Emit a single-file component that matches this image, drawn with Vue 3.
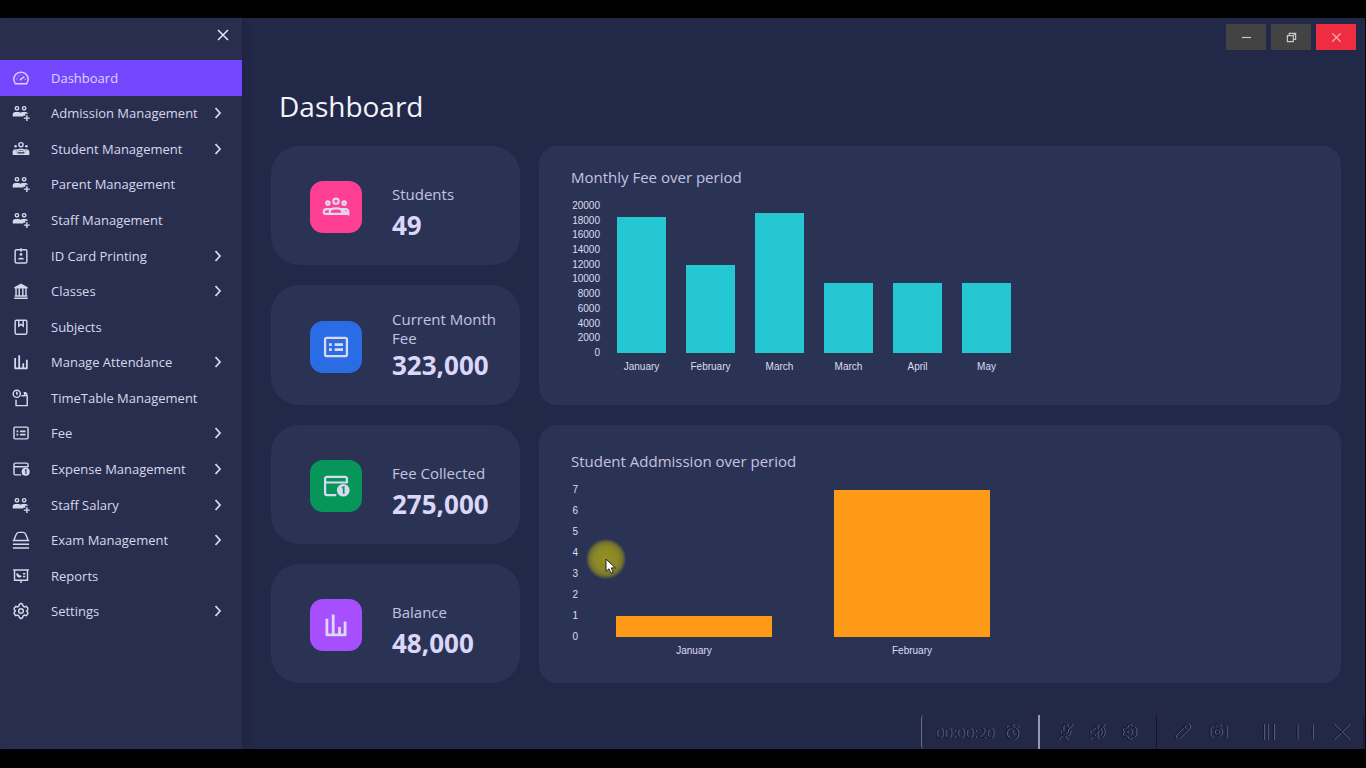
<script setup>
import { ref } from 'vue'

const active = ref('Dashboard')

const menu = [
  { label: 'Dashboard', icon: 'gauge' },
  { label: 'Admission Management', icon: 'people', sub: true },
  { label: 'Student Management', icon: 'group', sub: true },
  { label: 'Parent Management', icon: 'people' },
  { label: 'Staff Management', icon: 'people' },
  { label: 'ID Card Printing', icon: 'badge', sub: true },
  { label: 'Classes', icon: 'bank', sub: true },
  { label: 'Subjects', icon: 'book' },
  { label: 'Manage Attendance', icon: 'bars', sub: true },
  { label: 'TimeTable Management', icon: 'schedule' },
  { label: 'Fee', icon: 'list', sub: true },
  { label: 'Expense Management', icon: 'card', sub: true },
  { label: 'Staff Salary', icon: 'people', sub: true },
  { label: 'Exam Management', icon: 'exam', sub: true },
  { label: 'Reports', icon: 'report' },
  { label: 'Settings', icon: 'gear', sub: true },
]

const stats = [
  { label: 'Students', value: '49', icon: 'groupLine', tone: 'pink' },
  { label: 'Current Month Fee', value: '323,000', icon: 'list', tone: 'blue' },
  { label: 'Fee Collected', value: '275,000', icon: 'card', tone: 'green' },
  { label: 'Balance', value: '48,000', icon: 'bars', tone: 'purple' },
]

const charts = [
  {
    title: 'Monthly Fee over period',
    kind: 'fee',
    max: 20000,
    ticks: [20000, 18000, 16000, 14000, 12000, 10000, 8000, 6000, 4000, 2000, 0],
    bars: [
      { label: 'January', value: 18500 },
      { label: 'February', value: 12000 },
      { label: 'March', value: 19000 },
      { label: 'March', value: 9500 },
      { label: 'April', value: 9500 },
      { label: 'May', value: 9500 },
    ],
  },
  {
    title: 'Student Addmission over period',
    kind: 'admission',
    max: 7,
    ticks: [7, 6, 5, 4, 3, 2, 1, 0],
    bars: [
      { label: 'January', value: 1 },
      { label: 'February', value: 7 },
    ],
  },
]

const gear =
  '<path d="M8.3 2.6 10 1.6l1.7 1 .6 1.9 1.5.9 2-.5 1.7 1.7v2l-1.3 1.4 1.3 1.4v2l-1.7 1.7-2-.5-1.5.9-.6 1.9-1.7 1-1.7-1-.6-1.9-1.5-.9-2 .5-1.7-1.7v-2L3.8 10 2.5 8.600v-2l1.700-1.700 2 .5 1.500-.9z"/><circle cx="10" cy="10" r="2.600"/>'

const icons = {
  gauge:
    '<path d="M3.600 16.300a8 8 0 1 1 12.800 0z"/><path d="m9.500 11.700 4.200-3.400"/><path d="M5 11h.9M7 7.400l.5.5M10 6v.8M14.200 11.400h.9" /><circle cx="9.600" cy="11.700" r="1" class="solid"/>',
  people:
    '<circle cx="5.500" cy="4.800" r="1.900"/><circle cx="13.500" cy="4.800" r="1.900"/><path class="solid" d="M.8 14v-2.500c0-1.600 1.300-2.700 2.800-2.700h3.700c1 0 1.700.4 2.200 1 .5-.6 1.200-1 2.200-1h3.500c1.300 0 2.300.8 2.600 1.900h-3v2.300h-2.300V14z"/><path d="M16.500 12.500v6.500M13.200 15.700h6.500"/>',
  group:
    '<circle cx="10" cy="5.200" r="2.300"/><circle cx="4" cy="7" r="1.400" class="solid"/><circle cx="16" cy="7" r="1.400" class="solid"/><path d="M1.500 15.500v-2c0-1.500 1-2.500 2.500-2.500h1.500M14.500 11H16c1.500 0 2.500 1 2.500 2.500v2M5.500 15.500v-2c0-1.700 1.300-3 3-3h3c1.700 0 3 1.300 3 3v2M.8 15.800h18.400"/><path class="solid" d="M2 12h3v3.500H2zM15 12h3v3.500h-3zM7 12h6v1.500H7z"/>',
  groupLine:
    '<circle cx="10" cy="5.900" r="1.900"/><circle cx="4.200" cy="7.200" r="1.200"/><circle cx="15.800" cy="7.200" r="1.200"/><path d="M1.300 14.900v-1.500c0-1.100.8-1.900 1.900-1.900h3.400M13.400 11.500h3.400c1.100 0 1.900.8 1.900 1.900v1.500zM1.300 14.900h17.400M5.600 14.500v-1.200c0-1.500 1.800-2.400 4.400-2.400s4.400.9 4.400 2.400v1.200"/>',
  badge:
    '<rect x="3.500" y="3" width="13" height="14.800" rx="1.500"/><path d="M10 1.500v3.800"/><circle cx="10" cy="8.300" r="1.500" class="solid"/><path class="solid" d="M6.600 13.800c0-2.600 6.800-2.600 6.800 0z"/>',
  bank:
    '<path class="solid" d="M10 1.800 17.500 5.700v1.600h-15V5.700z"/><path d="M4.500 7v8M8 7v8M12 7v8M15.500 7v8M3 15.500h14M2.500 18h15"/>',
  book:
    '<rect x="3.500" y="2.500" width="13" height="15.500" rx="1.500"/><path d="M7.500 3v6L10 7.200 12.500 9V3"/>',
  bars:
    '<path class="bar" d="M3.500 5.500v11.500M8 2.500V17M12.500 11.500V17M16.500 7.500V17M2.700 17h14.600"/>',
  schedule:
    '<circle cx="5.300" cy="5.300" r="4"/><path d="M5.300 3v2.500h1.200M13 4.200h2l1.900 2M14 3.500v3.700h3.200M16.900 7v11.500H4.500v-6.500M10.500 7.500H14"/>',
  list:
    '<rect x="2.200" y="3.500" width="15.600" height="13" rx="1.200"/><path class="bar" d="M5 8.300h2M5 11.900h2M9 8.300h6M9 11.900h6"/>',
  card:
    '<path d="M17.800 8V5c0-.9-.6-1.500-1.500-1.500H3.700c-.9 0-1.500.6-1.500 1.500v10c0 .9.600 1.500 1.500 1.500h6.500M2.200 7.500h15.600"/><circle class="solid" cx="15.200" cy="13" r="4.500"/><path class="cut" d="m14.300 11.500 1.200-.7v4.700"/>',
  exam:
    '<path d="M2.300 9.800 4.600 3.800C5.100 2.300 6.200 1.500 7.700 1.500h4.600c1.500 0 2.600.8 3.100 2.300l2.300 6M.8 10.500h18.400M1 14.700h18M1 18.800h18"/>',
  report:
    '<path d="M1.300 3.300h17.400M2.800 3.300v11.400h14.400V3.300M10 14.700v3"/><path class="solid" d="M5.500 6.500a3 3 0 1 0 5.500 3.500L8 9z"/><path d="M12.200 7.500h2.500M12.200 10.500h2.500"/>',
  gear,
}

const mic =
  '<rect x="7.500" y="1.500" width="5" height="10" rx="2.500"/><path d="M4.500 8.500c0 3.500 2.300 5.700 5.500 5.700s5.500-2.200 5.500-5.700M10 14.200V18M7 18h6M18 1.500 2 18.500"/>'
const mute =
  '<path d="M2 7.500h3l5-4.500v14l-5-4.500H2zM13 6.500c1.800 2 1.800 5 0 7M15.500 4c3.300 3.300 3.300 8.700 0 12M18.500 1.500 1.500 18.500"/>'
const pencil =
  '<path d="m2 18 1.300-5L14 2.300c1-1 2.700-1 3.700 0s1 2.700 0 3.700L7 16.700zM12 4.500 15.500 8"/>'
const camera =
  '<path d="M4 4H1v12h3M16 4h3v12h-3M7 4l1-2h4l1 2"/><circle cx="10" cy="10" r="4"/><circle cx="10" cy="10" r="1"/>'
</script>

<template>
  <div class="screen">
    <div class="window">
      <aside class="sidebar">
        <div class="side-head">
          <button class="side-close" type="button" aria-label="Close menu">
            <svg viewBox="0 0 12 12"><path d="m1 1 10 10M11 1 1 11" /></svg>
          </button>
        </div>
        <nav class="menu">
          <button
            v-for="item in menu"
            :key="item.label"
            type="button"
            class="item"
            :class="{ active: item.label === active }"
            @click="active = item.label"
          >
            <svg class="icon" viewBox="0 0 20 20" v-html="icons[item.icon]"></svg>
            <span class="item-label">{{ item.label }}</span>
            <svg v-if="item.sub" class="chevron" viewBox="0 0 8 12"><path d="m1.500 1 4.500 5-4.500 5" /></svg>
          </button>
        </nav>
      </aside>

      <main class="main">
        <div class="controls">
          <button type="button" class="ctl" aria-label="Minimize">
            <svg viewBox="0 0 12 12"><path d="M1 6h10" /></svg>
          </button>
          <button type="button" class="ctl" aria-label="Restore">
            <svg viewBox="0 0 12 12"><path d="M1.500 4h6.500v6.500H1.500zM3.500 4V1.500h7V8H8M8 4l2.500-2.500" /></svg>
          </button>
          <button type="button" class="ctl close" aria-label="Close">
            <svg viewBox="0 0 12 12"><path d="m1.500 1.500 9 9M10.500 1.500l-9 9" /></svg>
          </button>
        </div>

        <h1>Dashboard</h1>

        <div class="board">
          <section class="stats">
            <article v-for="s in stats" :key="s.label" class="stat">
              <div class="tile" :class="s.tone">
                <svg class="icon" viewBox="0 0 20 20" v-html="icons[s.icon]"></svg>
              </div>
              <div class="stat-text">
                <div class="stat-label">{{ s.label }}</div>
                <div class="stat-value">{{ s.value }}</div>
              </div>
            </article>
          </section>

          <section class="charts">
            <article v-for="c in charts" :key="c.title" class="chart" :class="c.kind">
              <h2>{{ c.title }}</h2>
              <div class="graph">
                <div class="axis">
                  <span v-for="t in c.ticks" :key="t">{{ t }}</span>
                </div>
                <div class="plot">
                  <div v-for="(b, i) in c.bars" :key="i" class="slot">
                    <div class="track">
                      <div class="fill" :style="{ height: (b.value / c.max) * 100 + '%' }"></div>
                    </div>
                    <span>{{ b.label }}</span>
                  </div>
                </div>
              </div>
              <div v-if="c.kind === 'admission'" class="pointer">
                <svg viewBox="0 0 40 40">
                  <path d="M20 20v12.500l3-2.700 2 4.500 2.200-1-2-4.400h4.100z" />
                </svg>
              </div>
            </article>
          </section>
        </div>
      </main>

      <div class="recorder">
        <div class="rec-part time">
          <span>00:00:20</span>
          <svg viewBox="0 0 20 20"><circle cx="10" cy="11.500" r="6.500" /><path d="M10 8v3.500l2 2M8 2h4M10 2v3M3 5l2-2M17 5l-2-2" /></svg>
        </div>
        <div class="rec-part tools">
          <button type="button" aria-label="Microphone off"><svg viewBox="0 0 20 20" v-html="mic"></svg></button>
          <button type="button" aria-label="Sound off"><svg viewBox="0 0 20 20" v-html="mute"></svg></button>
          <button type="button" aria-label="Recorder settings"><svg viewBox="0 0 20 20" v-html="gear"></svg></button>
        </div>
        <div class="rec-part actions">
          <button type="button" aria-label="Draw"><svg viewBox="0 0 20 20" v-html="pencil"></svg></button>
          <button type="button" aria-label="Take picture"><svg viewBox="0 0 20 20" v-html="camera"></svg></button>
          <button type="button" class="wide" aria-label="Pause"><svg viewBox="0 0 20 20"><path d="M4 1v18M8 1v18M15 1v18" /></svg></button>
          <button type="button" aria-label="Stop"><svg viewBox="0 0 20 20"><path d="M1 2v16M18 2v16" /></svg></button>
          <button type="button" class="end" aria-label="Close recorder"><svg viewBox="0 0 20 20"><path d="m1 1 18 18M19 1 1 19" /></svg></button>
        </div>
      </div>
    </div>
  </div>
</template>

<style>
body {
  background: #000;
}
</style>

<style scoped>
* {
  box-sizing: border-box;
}
.screen {
  display: flex;
  min-height: 100vh;
  padding: 18px 1px 19px 0;
  background: #000;
  font-family: "Open Sans", "Noto Sans", sans-serif;
}
button {
  border: 0;
  padding: 0;
  background: none;
  font: inherit;
  color: inherit;
  cursor: pointer;
}
svg {
  display: block;
  fill: none;
  stroke: currentColor;
}
.window {
  position: relative;
  flex: 1;
  display: flex;
  background: #222847;
}
.sidebar {
  display: flex;
  flex-direction: column;
  width: 242px;
  flex-shrink: 0;
  background: #292e4f;
  color: #d6d8ea;
  box-shadow: 2px 0 6px rgba(26, 29, 58, 0.4);
}
.side-head {
  display: flex;
  justify-content: flex-end;
  height: 42px;
  padding: 11px 13px 0 0;
}
.side-close {
  display: flex;
  width: 12px;
  height: 12px;
}
.side-close svg {
  width: 12px;
  height: 12px;
  stroke-width: 1.5;
  color: #e8e9f5;
}
.menu {
  flex: 1;
  display: grid;
  grid-auto-rows: 1fr;
  padding-bottom: 120px;
}
.item {
  display: flex;
  align-items: center;
  padding: 0 20px 0 12px;
  font-size: 13px;
  text-align: left;
}
.item.active {
  background: #7447ff;
  color: #ddd5ff;
}
.icon {
  width: 18px;
  height: 18px;
  stroke-width: 1.6;
}
.icon :deep(.solid) {
  fill: currentColor;
  stroke: none;
}
.icon :deep(.bar) {
  stroke-width: 2;
}
.icon :deep(.cut) {
  stroke: #292e4f;
  stroke-width: 1.2;
}
.item-label {
  flex: 1;
  padding-left: 21px;
}
.chevron {
  width: 8px;
  height: 12px;
  stroke-width: 1.8;
}
.main {
  flex: 1;
  display: flex;
  flex-direction: column;
  min-width: 0;
  padding: 6px 24px 66px 29px;
}
.controls {
  display: flex;
  justify-content: flex-end;
  gap: 5px;
  margin-right: -15px;
}
.ctl {
  display: grid;
  place-items: center;
  width: 40px;
  height: 26px;
  background: #434343;
  color: #c8c8c8;
}
.ctl svg {
  width: 11px;
  height: 11px;
  stroke-width: 1.3;
}
.ctl.close {
  background: #ee2d40;
  color: #ffb9bf;
}
h1 {
  margin: 36px 0 20px 8px;
  font-size: 28px;
  line-height: 40px;
  font-weight: 400;
  color: #f4f4fb;
}
.board {
  flex: 1;
  display: flex;
  gap: 19px;
}
.stats {
  display: grid;
  grid-auto-rows: 1fr;
  gap: 20px;
  width: 249px;
  flex-shrink: 0;
}
.stat {
  display: flex;
  align-items: flex-end;
  gap: 30px;
  padding: 0 16px 23px 39px;
  border-radius: 28px;
  background: #2b3354;
}
.tile {
  display: grid;
  place-items: center;
  width: 52px;
  height: 52px;
  margin-bottom: 9px;
  flex-shrink: 0;
  border-radius: 13px;
  color: #dcd8f2;
}
.tile .icon {
  width: 28px;
  height: 28px;
}
.pink {
  background: #ff3f93;
}
.blue {
  background: #2a6ce4;
}
.green {
  background: #06965a;
}
.purple {
  background: #a74eff;
}
.green .icon :deep(.cut) {
  stroke: #06965a;
}
.stat-label {
  min-height: 23px;
  font-size: 15px;
  line-height: 19px;
  color: #c3c3e2;
}
.stat-value {
  font-size: 26px;
  line-height: 34px;
  font-weight: 700;
  color: #dbd7fa;
}
.charts {
  flex: 1;
  display: grid;
  grid-auto-rows: 1fr;
  gap: 20px;
  min-width: 0;
}
.chart {
  position: relative;
  padding: 20px 32px 24px;
  border-radius: 18px;
  background: #2b3354;
}
.chart.admission {
  padding-top: 25px;
}
h2 {
  margin: 0 0 18px;
  font-size: 15px;
  line-height: 22px;
  font-weight: 400;
  color: #c3c3e2;
}
.graph {
  display: flex;
  max-width: 450px;
  font-family: "Liberation Sans", Arial, sans-serif;
  font-size: 10px;
  line-height: 10px;
  color: #dcdcf2;
}
.axis {
  display: flex;
  flex-direction: column;
  justify-content: space-between;
  height: 157px;
  margin-top: -5px;
  text-align: right;
}
.fee .axis {
  width: 29px;
  margin-right: 7px;
}
.admission .axis {
  width: 7px;
  margin-right: 7px;
}
.plot {
  flex: 1;
  display: flex;
}
.slot {
  flex: 1;
  display: flex;
  flex-direction: column;
  align-items: center;
  gap: 9px;
}
.track {
  display: flex;
  align-items: flex-end;
  width: 72%;
  height: 147px;
}
.fill {
  width: 100%;
  background: #25c8d2;
}
.admission .fill {
  background: #ff9a16;
}
.pointer {
  position: absolute;
  left: 47px;
  top: 114px;
  width: 40px;
  height: 40px;
  border-radius: 50%;
  background: radial-gradient(circle closest-side, #959020 0, #8b8726 60%, rgba(122, 121, 44, 0.9) 82%, rgba(80, 84, 62, 0.2) 100%);
}
.pointer path {
  fill: #fff;
  stroke: #222;
  stroke-width: 1;
}
.recorder {
  position: absolute;
  right: 1px;
  bottom: 0;
  display: flex;
  width: 443px;
  height: 34px;
  border-left: 1px solid #686b8c;
  border-right: 1px solid #141831;
  border-radius: 4px;
  background: #242847;
  color: #151a36;
}
.rec-part {
  display: flex;
  align-items: center;
}
.rec-part svg {
  width: 18px;
  height: 18px;
  stroke-width: 1.3;
  filter: drop-shadow(1px 0 0 #5d6184);
}
.time {
  width: 118px;
  gap: 9px;
  padding-left: 13px;
  border-right: 2px solid #9698b5;
  font-size: 15px;
  text-shadow: 1px 0 0 #5d6184;
}
.tools {
  width: 117px;
  gap: 14px;
  padding-left: 16px;
  border-right: 1px solid #10142d;
}
.actions {
  flex: 1;
  gap: 18px;
  padding-left: 16px;
}
.wide {
  margin-left: 15px;
}
</style>
